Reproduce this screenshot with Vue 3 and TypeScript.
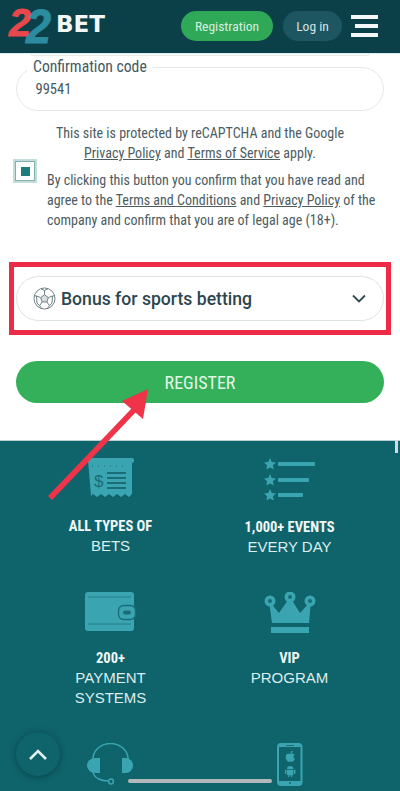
<script setup lang="ts">
const noop = (): void => {}
</script>

<template>
  <div class="page">
    <header class="topbar">
      <svg class="logo" width="108" height="53" viewBox="0 0 108 53" aria-label="22BET">
        <text x="9" y="36" class="logo-two red" textLength="22" lengthAdjust="spacingAndGlyphs">2</text>
        <text x="26" y="43" class="logo-two big blue" textLength="25" lengthAdjust="spacingAndGlyphs">2</text>
        <text x="56" y="32" class="logo-bet" textLength="49" lengthAdjust="spacingAndGlyphs">BET</text>
      </svg>
      <div class="actions">
        <button class="btn-reg" @click="noop">Registration</button>
        <button class="btn-log" @click="noop">Log in</button>
        <button class="burger" aria-label="Menu" @click="noop">
          <i></i><i class="short"></i><i></i>
        </button>
      </div>
    </header>

    <main class="form">
      <div class="prev-input"></div>
      <div class="field">
        <span class="field-label">Confirmation code</span>
        <span class="field-value">99541</span>
      </div>

      <p class="captcha">
        This site is protected by reCAPTCHA and the Google<br />
        <u>Privacy Policy</u> and <u>Terms of Service</u> apply.
      </p>

      <div class="agree">
        <span class="check"><span class="check-mark"></span></span>
        <p class="agree-text">
          By clicking this button you confirm that you have read and agree to the
          <u>Terms and Conditions</u> and <u>Privacy Policy</u> of the company and confirm that you are of legal age (18+).
        </p>
      </div>

      <div class="highlight">
        <div class="select">
          <svg class="ball" width="23" height="23" viewBox="0 0 24 24" fill="none" stroke="#6a7b80" stroke-width="1">
            <circle cx="12" cy="12" r="11" />
            <path d="M12 8l4 3-1.5 4.6h-5L8 11z" fill="#7d8d92" fill-opacity=".3" />
            <path d="M12 8V3.6M16 11l4.400-1.600M14.500 15.600l2.600 3.800M9.500 15.600l-2.600 3.800M8 11L3.600 9.400" />
            <path d="M8.500 2l3.500 1.600L15.500 2M20.400 9.400l2.400-.4M20.400 9.400l-.600 7.400-2.700 2.600L15 22.500M6.900 19.400L9 22.500M6.900 19.400l-2.700-2.600-.600-7.400L1.200 9" />
          </svg>
          <span class="select-text">Bonus for sports betting</span>
          <svg class="chev" width="14" height="9" viewBox="0 0 14 9" fill="none" stroke="#2f4a53" stroke-width="1.800">
            <path d="M1 1.500l6 6 6-6" />
          </svg>
        </div>
      </div>

      <button class="register" @click="noop">REGISTER</button>
    </main>

    <section class="features">
      <div class="feature first">
        <svg width="48" height="42" viewBox="0 0 48 42">
          <rect x="0" y="0" width="47" height="5" rx="2" fill="#3aa5b1" />
          <path d="M1 2h44v34l-3 3-4-3-4 3-4-3-4 3-4-3-4 3-4-3-4 3-4-3-2 2z" fill="#3aa5b1" />
          <path d="M5 8h36" stroke="#1a6d76" stroke-width="1" stroke-dasharray="1 5" />
          <text x="7" y="29" class="dollar">$</text>
          <path d="M20 15h19M20 20h19M20 25h19M20 30h19" stroke="#1a6d76" stroke-width="2.200" />
        </svg>
        <div class="f-text"><b>ALL TYPES OF</b><span>BETS</span></div>
      </div>
      <div class="feature first">
        <svg width="52" height="43" viewBox="0 0 52 43" fill="#3aa5b1">
          <path d="M6 0l1.800 3.900 4.200.5-3.100 2.900.8 4.200L6 9.400l-3.700 2.100.8-4.200L0 4.400l4.200-.5z" />
          <path d="M6 16l1.800 3.900 4.200.5-3.100 2.900.8 4.200L6 25.400l-3.700 2.100.8-4.200L0 20.400l4.200-.5z" />
          <path d="M6 31l1.800 3.900 4.200.5-3.100 2.900.8 4.200L6 40.400l-3.700 2.100.8-4.200L0 35.400l4.200-.5z" />
          <rect x="14" y="4" width="37" height="4" rx="1" />
          <rect x="14" y="20" width="31" height="4" rx="1" />
          <rect x="14" y="35" width="25" height="4" rx="1" />
        </svg>
        <div class="f-text"><b>1,000+ EVENTS</b><span>EVERY DAY</span></div>
      </div>
      <div class="feature">
        <svg width="52" height="42" viewBox="0 0 52 42">
          <rect x="0" y="0" width="49" height="39" rx="3" fill="#3aa5b1" />
          <path d="M3 5h43M3 32h43" stroke="#1a6d76" stroke-width="1" opacity=".7" />
          <rect x="33.500" y="13.500" width="17" height="14" rx="5" fill="#3aa5b1" stroke="#1a6d76" stroke-width="1.400" />
          <rect x="38" y="18.500" width="8" height="4" rx="2" fill="#1a6d76" />
        </svg>
        <div class="f-text"><b>200+</b><span>PAYMENT</span><span>SYSTEMS</span></div>
      </div>
      <div class="feature">
        <svg width="52" height="42" viewBox="0 0 52 42" fill="#3aa5b1">
          <path d="M5 9l10 12L26 5l10 16L47 9l-2 22H8z" />
          <rect x="7" y="35" width="38" height="6" />
          <circle cx="6" cy="9" r="5.500" />
          <circle cx="26" cy="5" r="5.500" />
          <circle cx="46" cy="9" r="5.500" />
          <circle cx="6" cy="9" r="2" fill="#1a6d76" />
          <circle cx="26" cy="5" r="2" fill="#1a6d76" />
          <circle cx="46" cy="9" r="2" fill="#1a6d76" />
        </svg>
        <div class="f-text"><b>VIP</b><span>PROGRAM</span></div>
      </div>
      <div class="feature">
        <svg width="48" height="43" viewBox="0 0 48 43" fill="#3aa5b1">
          <path d="M6 17v-1a17.500 15.500 0 0 1 35 0v1" fill="none" stroke="#3aa5b1" stroke-width="1.500" />
          <path d="M13 15v15H8a8 7.500 0 0 1 0-15z" />
          <path d="M35 15h4a7 7.500 0 0 1 0 15h-4z" />
          <path d="M6 29c1 6 8 9 15 9" fill="none" stroke="#3aa5b1" stroke-width="1.500" />
          <circle cx="24" cy="38.500" r="2.400" fill="none" stroke="#3aa5b1" stroke-width="1.500" />
        </svg>
      </div>
      <div class="feature">
        <svg width="26" height="43" viewBox="0 0 26 43" fill="#3aa5b1">
          <rect x="1" y="1" width="23.500" height="41" rx="3" fill="none" stroke="#3aa5b1" stroke-width="2" />
          <rect x="1" y="1" width="24" height="3" rx="1" />
          <rect x="9" y="2" width="8" height="1" fill="#1a6d76" />
          <rect x="1" y="38" width="24" height="4" rx="1" />
          <circle cx="13" cy="40" r="1.100" fill="#1a6d76" />
          <path d="M13.500 11c1-.6 3-.6 4 .8-1.600 1.200-1.500 3.200.3 4-.6 1.600-1.600 3-2.500 3-.7 0-1.100-.4-1.800-.4s-1.200.4-1.800.4c-1.200 0-3-2.800-3-4.900 0-2.400 1.700-3.400 3-3.400 .7 0 1.200.5 1.800 .5zM13.500 10.200c0-1.200.8-2.400 2.400-2.500 0 1.400-.8 2.500-2.400 2.500z" />
          <path d="M10 26a3.200 3 0 0 1 6.400 0zM10 26.800h6.400v4.700a.8.8 0 0 1-.8.8h-.4V34h-1.200v-1.700h-1.600V34h-1.200v-1.700h-.4a.8.8 0 0 1-.8-.8zM8 26.800h1.400v4H8zM17 26.800h1.400v4H17z" />
        </svg>
      </div>
    </section>

    <svg class="arrow" width="400" height="140" viewBox="0 0 400 140">
      <path d="M50 112L134 24" stroke="#ef3349" stroke-width="5.500" fill="none" />
      <path d="M148 3L122 15l21 18z" fill="#ef3349" />
    </svg>

    <span class="scrollbar"></span>
    <button class="to-top" aria-label="Back to top" @click="noop">
      <svg width="18" height="11" viewBox="0 0 18 11" fill="none" stroke="#dff0ef" stroke-width="2.600">
        <path d="M1 10l8-8 8 8" />
      </svg>
    </button>
    <span class="home-bar"></span>
  </div>
</template>

<style>
html, body { margin: 0; background: #fff; }
</style>

<style scoped>
.page {
  position: relative;
  width: 400px;
  height: 791px;
  overflow: hidden;
  background: #fff;
  font-family: Roboto, "Liberation Sans", sans-serif;
  font-stretch: 75%;
}
button { font-family: inherit; font-stretch: inherit; border: 0; padding: 0; cursor: pointer; }
p { margin: 0; }

.topbar {
  position: relative;
  height: 53px;
  box-sizing: border-box;
  background: #0c4049;
  box-shadow: 0 1px 0 #d8eeee;
  display: flex;
  align-items: center;
  justify-content: space-between;
  padding: 0 22px 0 0;
}
.logo { display: block; }
.logo-two {
  font-family: "Liberation Sans", sans-serif;
  font-weight: 700;
  font-style: italic;
  font-size: 39px;
  stroke-width: .9px;
}
.logo-two.big { font-size: 48px; }
.red { fill: #e8474c; stroke: #e8474c; }
.blue { fill: #2a8c9e; stroke: #2a8c9e; }
.logo-bet { font-family: "DejaVu Sans", sans-serif; font-weight: 700; font-size: 23px; fill: #f2f7f6; }
.actions { display: flex; align-items: center; }
.btn-reg, .btn-log {
  height: 30px;
  border-radius: 15px;
  color: #d8efe0;
  font-size: 13.500px;
  margin-top: -2px;
}
.btn-reg { width: 92px; background: #2fa857; }
.btn-log { width: 59px; margin-left: 10px; background: #1d5661; color: #d5e5e6; }
.burger {
  width: 27px;
  margin-left: 9px;
  margin-top: -2px;
  background: none;
  display: flex;
  flex-direction: column;
  align-items: flex-end;
  gap: 5px;
}
.burger i { display: block; width: 27px; height: 4px; background: #f3f7f7; }
.burger i.short { width: 23px; }

.form { padding: 0 16px; height: 387px; box-sizing: border-box; }
.prev-input {
  height: 2px;
  margin: 0 14px;
  border: 1px solid #e4eaea;
  border-top: 0;
  border-radius: 0 0 14px 14px;
}
.field {
  position: relative;
  height: 44px;
  margin-top: 11px;
  box-sizing: border-box;
  border: 1.500px solid #e3e8e8;
  border-radius: 22px;
  display: flex;
  align-items: center;
  padding: 0 18.500px;
}
.field-label {
  position: absolute;
  left: 10px;
  top: -11px;
  padding: 0 6px;
  background: #fff;
  color: #46595f;
  font-size: 15.700px;
  line-height: 19px;
}
.field-value { color: #46595f; font-size: 14.500px; margin-top: 1px; }
.captcha {
  margin-top: 12px;
  text-align: center;
  color: #4c5c61;
  font-size: 14px;
  line-height: 20px;
}
.agree { display: flex; align-items: flex-start; margin: -4px 0 0 -3px; }
.check {
  flex: none;
  width: 24px;
  height: 24px;
  box-sizing: border-box;
  background: #fff;
  border: 2.500px solid #c4dcda;
  outline: 1px solid #7fb0ae;
  outline-offset: -3.500px;
  display: flex;
  align-items: center;
  justify-content: center;
}
.check-mark { width: 9px; height: 9px; background: #1d7d7c; }
.agree-text {
  margin: 11px 0 0 10px;
  color: #4c5c61;
  font-size: 14px;
  line-height: 20px;
}
.highlight {
  margin: 32px -7px 0;
  height: 73px;
  box-sizing: border-box;
  border: 5px solid #ee2b47;
  display: flex;
  align-items: center;
  justify-content: center;
}
.select {
  width: 368px;
  height: 45px;
  flex: none;
  box-sizing: border-box;
  border: 1px solid #dde3e3;
  border-radius: 23px;
  background: #fff;
  display: flex;
  align-items: center;
  padding: 0 17px 0 16px;
}
.select-text {
  margin-left: 5px;
  flex: 1;
  color: #2c4650;
  font-size: 17.600px;
  font-weight: 500;
  font-stretch: 100%;
}
.register {
  display: block;
  width: 368px;
  height: 42px;
  margin-top: 26px;
  border-radius: 21px;
  background: #33b059;
  color: #e4f6e6;
  font-size: 18px;
}

.features {
  height: 351px;
  background: #0f636b;
  box-sizing: border-box;
  padding: 17px 0 0 21px;
  display: grid;
  grid-template-columns: 179px 179px;
  grid-template-rows: 134px 151px auto;
  border-top: 1px solid #b7cfd1;
}
.feature { display: flex; flex-direction: column; align-items: center; }
.feature svg { display: block; flex: none; }
.first .f-text { margin-top: 17px; }
.f-text {
  margin-top: 15px;
  display: flex;
  flex-direction: column;
  align-items: center;
  color: #dceeed;
  line-height: 20px;
}
.f-text b { font-size: 14.500px; font-weight: 700; color: #f1f8f7; margin-bottom: -1px; }
.f-text span {
  font-family: "Liberation Sans", sans-serif;
  font-stretch: normal;
  font-size: 15px;
}
.dollar { font-family: "Liberation Sans", sans-serif; font-size: 17px; fill: #1a6d76; }

.arrow { position: absolute; left: 0; top: 386px; pointer-events: none; }
.scrollbar {
  position: absolute;
  left: 395px;
  top: 440px;
  width: 3px;
  height: 13px;
  background: #cfdcdd;
}
.to-top {
  position: absolute;
  left: 16px;
  top: 732px;
  width: 44px;
  height: 44px;
  border-radius: 50%;
  background: #0f636b;
  box-shadow: 0 1px 6px rgba(0, 40, 45, .5);
  display: flex;
  align-items: center;
  justify-content: center;
}
.home-bar {
  position: absolute;
  left: 128px;
  top: 779px;
  width: 144px;
  height: 4px;
  border-radius: 2px;
  background: #b3b8b8;
}
</style>
